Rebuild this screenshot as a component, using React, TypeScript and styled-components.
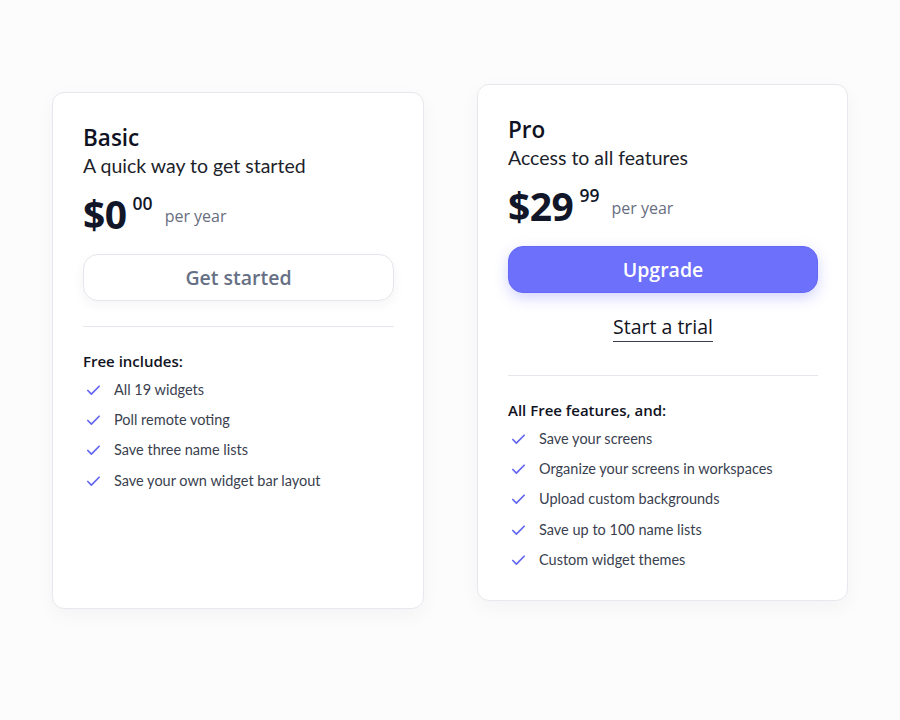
import styled, { createGlobalStyle } from "styled-components";

const GlobalStyle = createGlobalStyle`
  html, body {
    margin: 0;
    padding: 0;
    background: #fcfcfc;
  }
  body {
    font-family: Lato, "Noto Sans", sans-serif;
    -webkit-font-smoothing: antialiased;
  }
`;

const Page = styled.div`
  width: 900px;
  height: 720px;
  box-sizing: border-box;
  padding-top: 92px;
  display: flex;
  justify-content: center;
  align-items: flex-start;
`;

const Plans = styled.div`
  display: grid;
  grid-template-columns: 372px 371px;
  gap: 53px;
  align-items: stretch;
`;

const Card = styled.div<{ $raised?: boolean }>`
  background: #fff;
  border: 1px solid #e7e8ee;
  border-radius: 12px;
  box-shadow: 0 6px 20px rgba(30, 30, 60, 0.04);
  padding: 30px 29px 26px 30px;
  display: flex;
  flex-direction: column;
  transform: translateY(${(p) => (p.$raised ? "-8px" : "0")});
`;

const Title = styled.h2`
  margin: 0;
  font-family: "Open Sans", sans-serif;
  font-size: 22.5px;
  font-weight: 600;
  line-height: 30px;
  color: #0f1222;
`;

const Subtitle = styled.p`
  margin: 0;
  font-size: 19.5px;
  line-height: 26px;
  color: #1d1f2b;
`;

const PriceRow = styled.div`
  display: flex;
  align-items: flex-start;
  margin-top: 12px;
  height: 46px;
`;

const Amount = styled.span`
  font-family: "Open Sans", sans-serif;
  font-size: 39px;
  font-weight: 700;
  line-height: 46px;
  color: #121629;
  letter-spacing: -0.5px;
`;

const Cents = styled.span`
  font-family: "Open Sans", sans-serif;
  font-size: 17.5px;
  font-weight: 600;
  line-height: 20px;
  margin: 2px 0 0 6px;
  color: #121629;
`;

const Period = styled.span`
  font-family: "Open Sans", sans-serif;
  font-size: 16px;
  font-weight: 500;
  color: #686e80;
  margin: 14px 0 0 12px;
`;

const Button = styled.button<{ $primary?: boolean }>`
  margin-top: 17px;
  width: 100%;
  height: 47px;
  border-radius: 15px;
  font-family: "Open Sans", sans-serif;
  font-size: 19.5px;
  font-weight: 600;
  cursor: pointer;
  border: 1px solid ${(p) => (p.$primary ? "#6468f5" : "#e5e6ec")};
  background: ${(p) => (p.$primary ? "#6c70fb" : "#fff")};
  color: ${(p) => (p.$primary ? "#fff" : "#667085")};
  box-shadow: ${(p) =>
    p.$primary
      ? "0 5px 14px rgba(108, 112, 251, 0.3)"
      : "0 4px 12px rgba(30, 30, 60, 0.05)"};
`;

const TrialLink = styled.a`
  align-self: center;
  margin-top: 22px;
  font-family: "Open Sans", sans-serif;
  font-size: 19.5px;
  font-weight: 500;
  line-height: 24px;
  color: #111322;
  text-decoration: none;
  padding-bottom: 2px;
  border-bottom: 1px solid #3a3d4d;
`;

const Divider = styled.hr<{ $gap: number }>`
  border: none;
  border-top: 1px solid #e6e7ec;
  margin: ${(p) => p.$gap}px 0 23px;
  width: 100%;
`;

const ListHeading = styled.div`
  font-family: "Open Sans", sans-serif;
  font-size: 15px;
  font-weight: 600;
  line-height: 22px;
  color: #111322;
`;

const Features = styled.ul`
  list-style: none;
  margin: 2px 0 0;
  padding: 0;
  display: flex;
  flex-direction: column;
`;

const Feature = styled.li`
  display: flex;
  align-items: center;
  height: 30.3px;
  font-size: 14.5px;
  color: #3a3f4f;
  svg {
    flex: none;
    margin: 2px 12px 0 2px;
  }
`;

const Check = () => (
  <svg width="17" height="17" viewBox="0 0 24 24" fill="none" stroke="#6366f1" strokeWidth="2.4" strokeLinecap="round" strokeLinejoin="round">
    <path d="M20 6 9 17l-5-5" />
  </svg>
);

type Plan = {
  name: string;
  tagline: string;
  dollars: string;
  cents: string;
  heading: string;
  features: string[];
  pro?: boolean;
};

const plans: Plan[] = [
  {
    name: "Basic",
    tagline: "A quick way to get started",
    dollars: "$0",
    cents: "00",
    heading: "Free includes:",
    features: ["All 19 widgets", "Poll remote voting", "Save three name lists", "Save your own widget bar layout"],
  },
  {
    name: "Pro",
    tagline: "Access to all features",
    dollars: "$29",
    cents: "99",
    heading: "All Free features, and:",
    features: [
      "Save your screens",
      "Organize your screens in workspaces",
      "Upload custom backgrounds",
      "Save up to 100 name lists",
      "Custom widget themes",
    ],
    pro: true,
  },
];

export default function App() {
  return (
    <>
      <GlobalStyle />
      <Page>
        <Plans>
          {plans.map((plan) => (
            <Card key={plan.name} $raised={plan.pro}>
              <Title>{plan.name}</Title>
              <Subtitle>{plan.tagline}</Subtitle>
              <PriceRow>
                <Amount>{plan.dollars}</Amount>
                <Cents>{plan.cents}</Cents>
                <Period>per year</Period>
              </PriceRow>
              {plan.pro ? (
                <>
                  <Button $primary>Upgrade</Button>
                  <TrialLink href="#">Start a trial</TrialLink>
                </>
              ) : (
                <Button>Get started</Button>
              )}
              <Divider $gap={plan.pro ? 33 : 25} />
              <ListHeading>{plan.heading}</ListHeading>
              <Features>
                {plan.features.map((f) => (
                  <Feature key={f}>
                    <Check />
                    {f}
                  </Feature>
                ))}
              </Features>
            </Card>
          ))}
        </Plans>
      </Page>
    </>
  );
}
